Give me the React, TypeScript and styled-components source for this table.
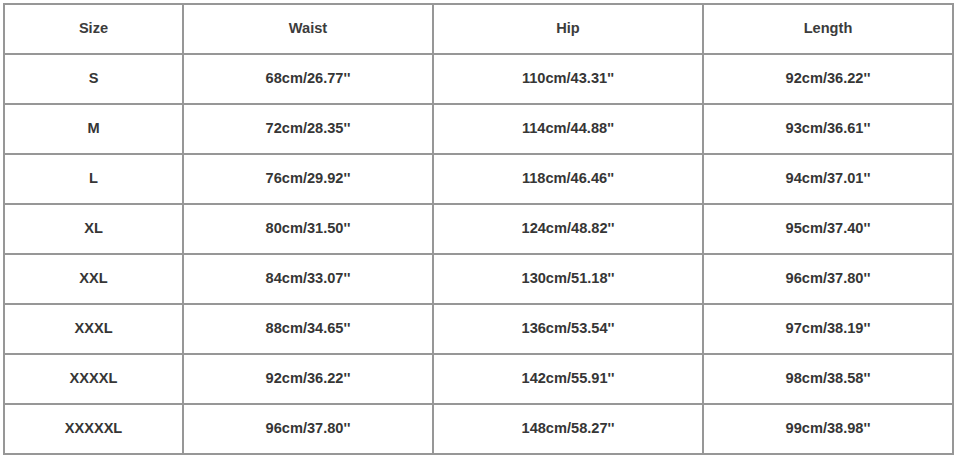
import React from "react";
import styled, { createGlobalStyle } from "styled-components";

const GlobalStyle = createGlobalStyle`
  body {
    margin: 0;
    background: #ffffff;
    font-family: "Liberation Sans", Arial, sans-serif;
  }
`;

const Page = styled.div`
  padding: 3px;
`;

const Grid = styled.div`
  display: grid;
  grid-template-columns: 177px 248px 268px 248px;
  grid-auto-rows: 48px;
  gap: 2px;
  padding: 2px;
  width: max-content;
  background: #979797;
`;

const Cell = styled.div<{ $head?: boolean }>`
  background: #ffffff;
  display: flex;
  align-items: center;
  justify-content: center;
  padding-bottom: 2px;
  font-size: 14.6px;
  font-weight: bold;
  color: ${(p) => (p.$head ? "#3c3c3c" : "#363636")};
`;

const header = ["Size", "Waist", "Hip", "Length"];

const rows = [
  ["S", "68cm/26.77''", "110cm/43.31''", "92cm/36.22''"],
  ["M", "72cm/28.35''", "114cm/44.88''", "93cm/36.61''"],
  ["L", "76cm/29.92''", "118cm/46.46''", "94cm/37.01''"],
  ["XL", "80cm/31.50''", "124cm/48.82''", "95cm/37.40''"],
  ["XXL", "84cm/33.07''", "130cm/51.18''", "96cm/37.80''"],
  ["XXXL", "88cm/34.65''", "136cm/53.54''", "97cm/38.19''"],
  ["XXXXL", "92cm/36.22''", "142cm/55.91''", "98cm/38.58''"],
  ["XXXXXL", "96cm/37.80''", "148cm/58.27''", "99cm/38.98''"],
];

const App = () => {
  return (
    <>
      <GlobalStyle />
      <Page>
        <Grid>
          {header.map((h) => (
            <Cell key={h} $head>
              {h}
            </Cell>
          ))}
          {rows.map((r) =>
            r.map((v, i) => <Cell key={r[0] + i}>{v}</Cell>)
          )}
        </Grid>
      </Page>
    </>
  );
};

export default App;
